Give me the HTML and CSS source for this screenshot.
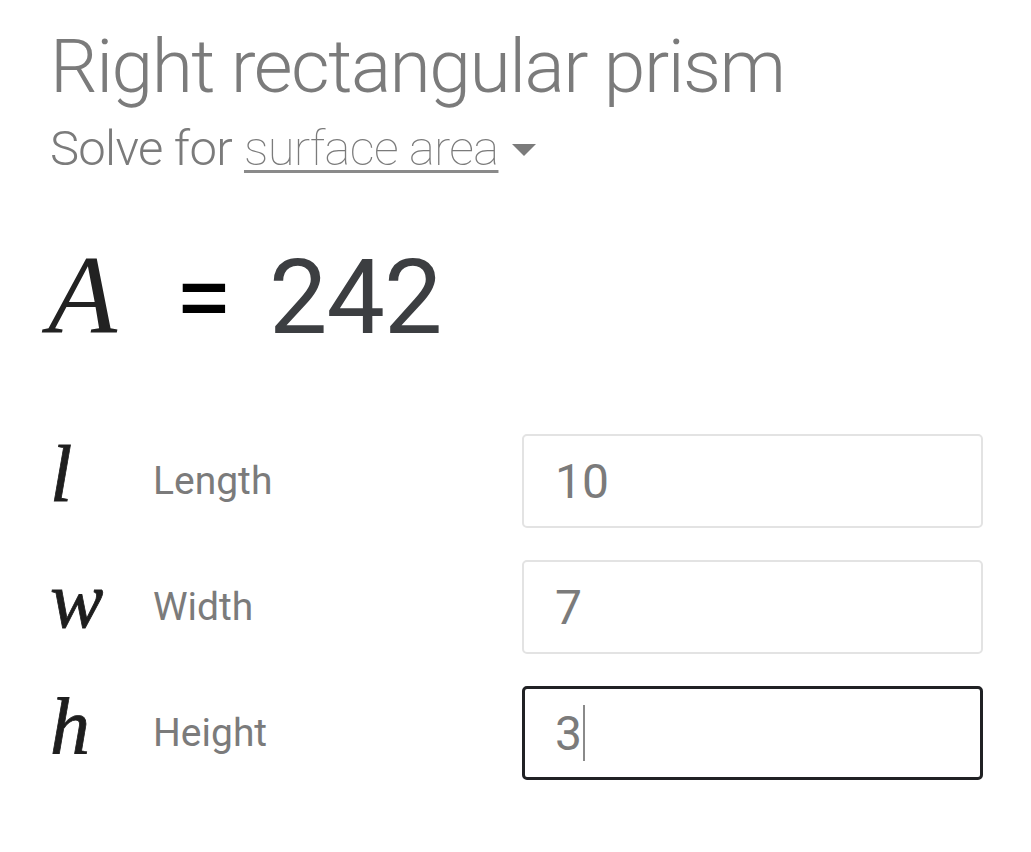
FILE: index.html
```html
<!DOCTYPE html>
<html lang="en">
<head>
<meta charset="utf-8">
<title>Right rectangular prism</title>
<link rel="stylesheet" href="styles.css">
</head>
<body>
<main class="card">
  <header class="head">
    <h1 class="title">Right rectangular prism</h1>
    <div class="solve">
      <span class="solve-label">Solve for</span>
      <span class="solve-pick">surface area</span>
      <span class="caret"></span>
    </div>
  </header>

  <div class="result">
    <span class="result-var">A</span>
    <span class="result-eq">=</span>
    <span class="result-val">242</span>
  </div>

  <div class="fields">
    <div class="field">
      <span class="sym">l</span>
      <span class="label">Length</span>
      <div class="box"><span class="val">10</span></div>
    </div>
    <div class="field">
      <span class="sym">w</span>
      <span class="label">Width</span>
      <div class="box"><span class="val">7</span></div>
    </div>
    <div class="field">
      <span class="sym">h</span>
      <span class="label">Height</span>
      <div class="box box-focus"><span class="val">3</span><span class="cursor"></span></div>
    </div>
  </div>
</main>
</body>
</html>
```

FILE: styles.css
```css
html, body {
  margin: 0;
  padding: 0;
  background: #ffffff;
}

.card {
  width: 1031px;
  height: 852px;
  box-sizing: border-box;
  padding: 0 48px 0 50px;
  font-family: Roboto, "Liberation Sans", sans-serif;
  overflow: hidden;
}

.head {
  padding-top: 21px;
}

.title {
  margin: 0;
  font-size: 75px;
  font-weight: 300;
  line-height: 90px;
  color: #7b7b7b;
  letter-spacing: -1.5px;
}

.solve {
  display: flex;
  align-items: center;
  margin-top: 7px;
  font-size: 49px;
  line-height: 62px;
  color: #7b7b7b;
  letter-spacing: -0.7px;
}

.solve-label {
  font-weight: 300;
  margin-right: 12px;
}

.solve-pick {
  font-weight: 100;
  text-decoration: underline;
  text-decoration-thickness: 3px;
  text-underline-offset: 5px;
  text-decoration-color: #8a8a8a;
}

.caret {
  width: 0;
  height: 0;
  margin-left: 14px;
  margin-top: 2px;
  border-left: 12px solid transparent;
  border-right: 12px solid transparent;
  border-top: 12px solid #7b7b7b;
}

.result {
  display: flex;
  align-items: baseline;
  margin-top: 50px;
  margin-left: -2px;
  height: 122px;
}

.result-var {
  font-family: "Liberation Serif", serif;
  font-style: italic;
  font-size: 113px;
  color: #222222;
  width: 127px;
}

.result-eq {
  font-family: Roboto, sans-serif;
  font-size: 104px;
  color: #000000;
  width: 94px;
}

.result-val {
  font-family: Roboto, sans-serif;
  font-size: 104px;
  color: #3c3e41;
  letter-spacing: -1px;
}

.fields {
  display: flex;
  flex-direction: column;
  gap: 32px;
  margin-top: 82px;
}

.field {
  display: grid;
  grid-template-columns: 103px 1fr 461px;
  align-items: center;
  height: 94px;
}

.sym {
  font-family: "Liberation Serif", serif;
  font-style: italic;
  font-size: 80px;
  line-height: 80px;
  color: #1e1e1e;
  margin-top: -15px;
  -webkit-text-stroke: 0.8px #1e1e1e;
}

.label {
  font-size: 39px;
  color: #7b7b7b;
}

.box {
  box-sizing: border-box;
  height: 94px;
  border: 2px solid #e3e3e3;
  border-radius: 5px;
  padding-left: 31px;
  display: flex;
  align-items: center;
}

.box-focus {
  border: 3px solid #202124;
  padding-left: 30px;
}

.val {
  font-size: 48px;
  color: #7b7b7b;
}

.cursor {
  width: 2px;
  height: 56px;
  background: #8a8a8a;
  margin-left: 1px;
}
```
